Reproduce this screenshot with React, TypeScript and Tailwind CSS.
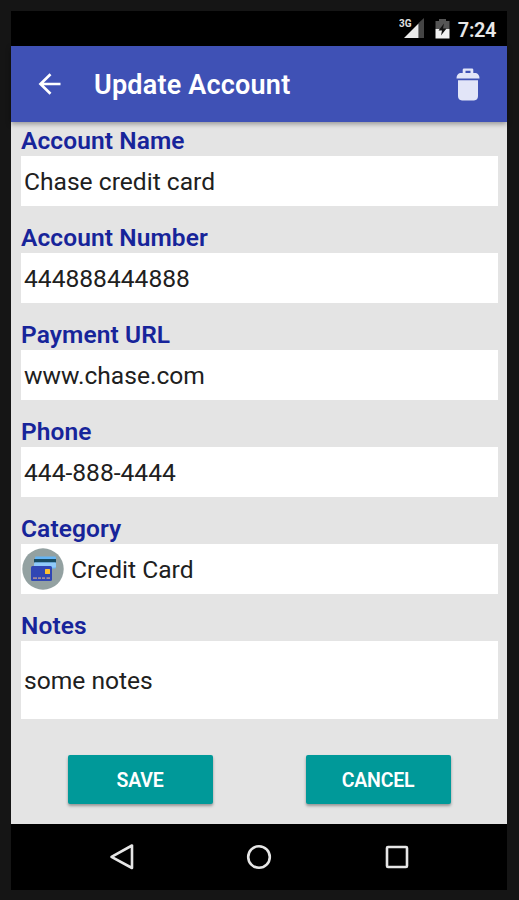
import type { ReactNode } from "react";

const CardIcon = () => (
  <svg className="w-[42px] h-[42px]" viewBox="0 0 42 42">
    <circle cx="21" cy="21" r="20.700" fill="#93a1a1" />
    <rect x="13" y="8.500" width="21" height="12" rx="1" fill="#64b5f6" />
    <rect x="12" y="11" width="22" height="3.500" fill="#174a60" />
    <rect x="12" y="14.500" width="22" height="5" rx="1" fill="#90caf9" />
    <rect x="9" y="18" width="21" height="15" rx="1.500" fill="#3046b4" />
    <rect x="23" y="21" width="5" height="5" rx="0.500" fill="#ffc030" />
    <path d="M11 30.200h4M16 30.200h3M20 30.200h3M24.500 30.200h3.500" stroke="#a08a9c" strokeWidth="1.800" />
  </svg>
);

const StatusBar = () => (
  <div className="h-[35px] bg-black flex items-center justify-end pr-[11px] text-[#e8e8e8]">
    <svg className="w-[26px] h-[24px] mr-[10px]" viewBox="0 0 26 24">
      <path d="M19.500 6 L25 1 V21 H19.500 Z" fill="#444" />
      <path d="M5 21 L19.500 6.500 V21 Z" fill="#ececec" />
      <text x="0" y="9.500" fontSize="10.500" fontWeight="700" fill="#e0e0e0" className="font-['Roboto',sans-serif]" textLength="12.500" lengthAdjust="spacingAndGlyphs">3G</text>
    </svg>
    <svg className="w-[15px] h-[22px] mr-[8px]" viewBox="0 0 15 22">
      <path d="M4 1h7v2h3.500v8H0.500V3H4z" fill="#555" />
      <path d="M0.500 11h14v9.500h-14z" fill="#f0f0f0" />
      <path d="M9 5.500 L3.500 12.500 H7 L6 17.500 L11.500 10.500 H8 Z" fill="#111" />
    </svg>
    <span className="text-[20px] font-semibold leading-none pt-[2px] tracking-[-0.400px]">7:24</span>
  </div>
);

const AppBar = () => (
  <div className="relative z-10 h-[76px] bg-[#3f51b5] flex items-center px-[27px] shadow-[0_2px_5px_rgba(0,0,0,0.35)]">
    <svg className="w-[23px] h-[22px]" viewBox="0 0 23 22" fill="none" stroke="white" strokeWidth="2.700">
      <path d="M22.500 11H3M12.500 1.200L2.500 11l10 9.800" />
    </svg>
    <h1 className="ml-[33px] pt-[3px] text-[27px] font-semibold tracking-[0.200px] text-white leading-none whitespace-nowrap">Update Account</h1>
    <svg className="ml-auto w-[24px] h-[33px]" viewBox="0 0 24 33" fill="#e2e5f8">
      <path fillRule="evenodd" d="M8 0.500h8q1.300 0 1.300 1.300V5h2.700q3.500 1 3.500 5.500h-23Q0.500 6 4 5h2.700V1.800q0-1.300 1.300-1.300zM9.500 2.800V5h5V2.800z" />
      <path d="M2 12.200h20v15.800q0 4-4 4.500H6q-4-.5-4-4.500z" />
    </svg>
  </div>
);

interface FieldProps {
  label: string;
  boxClass?: string;
  children: ReactNode;
}

const Field = ({ label, boxClass = "h-[50px]", children }: FieldProps) => (
  <div className="mb-[17px]">
    <div className="h-[30px] leading-[29px] text-[24.500px] font-semibold tracking-[0.100px] text-[#17249a]">{label}</div>
    <div className={`${boxClass} bg-white flex items-center text-[24.600px] text-[#202020]`}>{children}</div>
  </div>
);

const Button = ({ children }: { children: ReactNode }) => (
  <button className="w-[145px] h-[49px] pt-[3px] rounded-[2px] bg-[#009999] text-white text-[19.500px] font-semibold tracking-[-0.200px] shadow-[0_2px_3px_rgba(0,0,0,0.35)]">
    {children}
  </button>
);

const NavBar = () => (
  <div className="h-[66px] bg-black flex items-center justify-center gap-[110px]">
    <svg className="w-[28px] h-[28px]" viewBox="0 0 28 28" fill="none" stroke="#e6e6e6" strokeWidth="2.600">
      <path d="M25 2.500V25L4.500 13.800Z" strokeLinejoin="round" />
    </svg>
    <svg className="w-[28px] h-[28px]" viewBox="0 0 28 28" fill="none" stroke="#e6e6e6" strokeWidth="2.600">
      <circle cx="14" cy="14" r="10.800" />
    </svg>
    <svg className="w-[28px] h-[28px]" viewBox="0 0 28 28" fill="none" stroke="#e6e6e6" strokeWidth="2.600">
      <rect x="4" y="4" width="20" height="20" rx="1" />
    </svg>
  </div>
);

const App = () => {
  return (
    <div className="w-[519px] h-[900px] bg-[#151515] pt-[11px] pl-[11px] pr-[12px] font-['Roboto',sans-serif] overflow-hidden">
      <StatusBar />
      <AppBar />
      <div className="h-[702px] bg-[#e4e4e4] pl-[10px] pr-[9px] pt-[4px]">
        <Field label="Account Name">
          <span className="pl-[3px] pt-[3px]">Chase credit card</span>
        </Field>
        <Field label="Account Number">
          <span className="pl-[3px] pt-[3px]">444888444888</span>
        </Field>
        <Field label="Payment URL">
          <span className="pl-[3px] pt-[3px]">www.chase.com</span>
        </Field>
        <Field label="Phone">
          <span className="pl-[3px] pt-[3px]">444-888-4444</span>
        </Field>
        <Field label="Category">
          <span className="pl-[1px]"><CardIcon /></span>
          <span className="pl-[7px] pt-[3px]">Credit Card</span>
        </Field>
        <Field label="Notes" boxClass="h-[78px]">
          <span className="pl-[3px] pt-[3px]">some notes</span>
        </Field>
        <div className="grid grid-cols-2 justify-items-center pt-[19px] pr-[1px]">
          <Button>SAVE</Button>
          <Button>CANCEL</Button>
        </div>
      </div>
      <NavBar />
    </div>
  );
};

export default App;
